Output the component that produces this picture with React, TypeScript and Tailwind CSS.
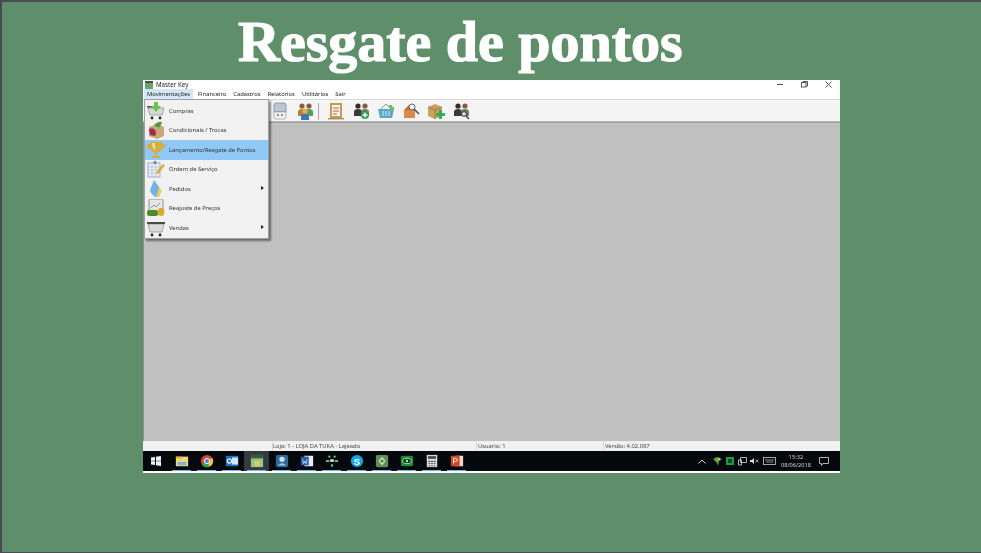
import React from 'react';

const sans = "font-['Noto_Sans','Liberation_Sans',Arial,sans-serif]";

function Person({ x, y, color, skin = '#8a5a3a' }: { x: number; y: number; color: string; skin?: string }) {
  return (
    <g>
      <circle cx={x} cy={y} r={2.6} fill={skin} />
      <path d={`M${x - 4} ${y + 10} v-4 q0 -3 4 -3 q4 0 4 3 v4 z`} fill={color} />
    </g>
  );
}

const Cart = ({ fill }: { fill: string }) => (
  <svg width="18" height="18" viewBox="0 0 18 18">
    <path d="M1 5h16l-2 8H3z" fill={fill} stroke="#8b8b8b" strokeWidth=".7" />
    <rect x="0" y="3" width="18" height="2" fill="#4b4b4b" />
    <circle cx="5" cy="16" r="1.4" fill="#222" />
    <circle cx="13" cy="16" r="1.4" fill="#222" />
  </svg>
);

const menuIcons: Record<string, React.ReactNode> = {
  compras: (
    <svg width="18" height="18" viewBox="0 0 18 18">
      <path d="M1 6h16l-2 7H3z" fill="#d8d8d8" stroke="#8b8b8b" strokeWidth=".7" />
      <rect x="0" y="4" width="6" height="1.6" fill="#555" />
      <path d="M7 0h4v4h3l-5 6-5-6h3z" fill="#6cc24a" />
      <circle cx="5" cy="16" r="1.4" fill="#222" />
      <circle cx="13" cy="16" r="1.4" fill="#222" />
    </svg>
  ),
  condicionais: (
    <svg width="18" height="18" viewBox="0 0 18 18">
      <path d="M2 6l8-3 7 3v9l-7 3-8-3z" fill="#c7a877" />
      <path d="M2 8q4-2 6 1t0 6l-5-1z" fill="#a32a4a" />
      <path d="M7 4q4-4 8-3l-2 5q-3 1-6-2" fill="#4f9a3a" />
    </svg>
  ),
  lancamento: (
    <svg width="18" height="18" viewBox="0 0 18 18">
      <path d="M3 1h12v2h3q0 5-4 6-2 3-4 3v3h3v2H5v-2h3v-3q-2 0-4-3Q0 8 0 3h3z" fill="#d2ae45" />
      <path d="M5 2h3v7q-3-2-3-7" fill="#f1e08a" />
    </svg>
  ),
  ordem: (
    <svg width="18" height="18" viewBox="0 0 18 18">
      <rect x="1" y="3" width="12" height="14" fill="#eef1f5" stroke="#8a9bb0" strokeWidth=".8" />
      <path d="M1 7h12M1 10h12M1 13h12M5 3v14M9 3v14" stroke="#9db3cc" strokeWidth=".6" />
      <path d="M10 11l6-7 2 1-6 8-3 1z" fill="#e8a53a" />
      <path d="M8 0l1 2 2 .5-2 .5-1 2-1-2-2-.5 2-.5z" fill="#6b7f99" />
    </svg>
  ),
  pedidos: (
    <svg width="18" height="18" viewBox="0 0 18 18">
      <path d="M9 3l6 8-3 6H8z" fill="#eccb62" />
      <path d="M7 0l5 7-3 10q-5-2-6-7z" fill="#6fb3e8" />
    </svg>
  ),
  reajuste: (
    <svg width="18" height="18" viewBox="0 0 18 18">
      <rect x="2" y="0" width="14" height="13" rx="1.5" fill="#e6e6e6" stroke="#777" strokeWidth=".8" />
      <path d="M4 9l3-3 2 2 4-4" stroke="#8a9a8a" fill="none" />
      <rect x="0" y="11" width="11" height="6" rx="2" fill="#4f8a2a" />
      <ellipse cx="14" cy="13" rx="3.4" ry="4" fill="#d9a92e" />
    </svg>
  ),
  vendas: <Cart fill="#d9d9d9" />,
};

const menuItems = [
  { key: 'compras', label: 'Compras' },
  { key: 'condicionais', label: 'Condicionais / Trocas' },
  { key: 'lancamento', label: 'Lançamento/Resgate de Pontos', active: true },
  { key: 'ordem', label: 'Ordem de Serviço' },
  { key: 'pedidos', label: 'Pedidos', sub: true },
  { key: 'reajuste', label: 'Reajuste de Preços' },
  { key: 'vendas', label: 'Vendas', sub: true },
];

const topMenu = ['Financeiro', 'Cadastros', 'Relatórios', 'Utilitários', 'Sair'];

const toolbarIcons: React.ReactNode[] = [
  <g key="usb">
    <path d="M5 1h8q2 0 2 2v7H3V3q0-2 2-2z" fill="#b9c7d6" stroke="#7c8896" strokeWidth=".8" />
    <path d="M3 10h12v5l-1 2H4l-1-2z" fill="#f2f2f2" stroke="#8a8a8a" strokeWidth=".6" />
    <path d="M6 13h2M10 13h2" stroke="#333" strokeWidth="1.2" />
  </g>,
  <g key="team">
    <Person x={6} y={4} color="#b5803a" />
    <Person x={13} y={4} color="#5a9a5a" />
    <Person x={9} y={9} color="#3f74c4" skin="#e2b23a" />
  </g>,
  null,
  <g key="clip">
    <rect x="3" y="1" width="12" height="15" fill="#c49a5a" />
    <rect x="5" y="3" width="8" height="11" fill="#fbf6ea" />
    <path d="M6 6h6M6 9h6M6 12h4" stroke="#c0504d" />
    <rect x="1" y="16" width="16" height="1.4" fill="#a98a52" />
  </g>,
  <g key="add">
    <Person x={6} y={4} color="#3a3a3a" skin="#3a2a20" />
    <Person x={13} y={4} color="#6a7f6a" />
    <circle cx="13" cy="13" r="4" fill="#2f9e55" />
    <path d="M13 10.5v5M10.5 13h5" stroke="#fff" strokeWidth="1.3" />
  </g>,
  <g key="basket">
    <path d="M1 7h16l-2 9H3z" fill="#5aa7c9" />
    <path d="M4 7l5-5 5 5" stroke="#7d9aa8" fill="none" />
    <path d="M6 9v5M9 9v5M12 9v5" stroke="#d8eef6" />
    <path d="M12 3h3v2h2v3h-3v-2h-2z" fill="#6cc24a" />
  </g>,
  <g key="search">
    <rect x="2" y="8" width="11" height="8" fill="#d98a4a" />
    <path d="M2 8l5-5 6 5z" fill="#c46a33" />
    <circle cx="10" cy="5" r="3" fill="#eef" stroke="#666" />
    <path d="M12 7l5 5" stroke="#444" strokeWidth="1.4" />
  </g>,
  <g key="box">
    <path d="M1 5l7-3 7 3v9l-7 3-7-3z" fill="#c9a15e" />
    <path d="M1 5l7 3 7-3M8 8v9" stroke="#8d6d35" fill="none" strokeWidth=".7" />
    <path d="M12 8h3v3h3v3h-3v3h-3v-3H9v-3h3z" fill="#2fae55" />
  </g>,
  <g key="find">
    <Person x={6} y={4} color="#3a3a3a" skin="#3a2a20" />
    <Person x={13} y={4} color="#6a7f6a" />
    <circle cx="12" cy="12" r="2.4" fill="#dde" stroke="#333" />
    <path d="M14 14l3 3" stroke="#333" strokeWidth="1.3" />
  </g>,
];

const taskIcons: { node: React.ReactNode; active?: boolean }[] = [
  { node: <g><rect x="1" y="3" width="14" height="11" fill="#f4d774" /><rect x="1" y="3" width="7" height="2.5" fill="#e4b93e" /><rect x="3" y="9" width="10" height="4" fill="#6fb8e0" /></g> },
  { node: <g><circle cx="8" cy="8" r="7" fill="#d9443a" /><path d="M8 8L2 12a7 7 0 0 0 9 2.5z" fill="#3da24f" /><path d="M8 8l3 6.500a7 7 0 0 0 3-10z" fill="#f3c334" /><circle cx="8" cy="8" r="3" fill="#4a86e0" stroke="#fff" /></g> },
  { node: <g><rect x="1" y="2" width="14" height="12" fill="#1a72c4" /><rect x="8" y="4" width="7" height="8" fill="#d4e6f6" /><circle cx="5" cy="8" r="2.4" fill="none" stroke="#fff" strokeWidth="1.2" /></g> },
  { node: <g><rect x="1" y="1" width="14" height="14" fill="#8fc98a" /><rect x="1" y="1" width="14" height="4" fill="#3a5a3a" /><path d="M5 8h6v6H5z" fill="#e6c65e" /></g>, active: true },
  { node: <g><rect x="1" y="1" width="14" height="14" rx="2" fill="#2f6a96" /><circle cx="8" cy="6" r="3" fill="#cfe2f0" /><path d="M3 13q5-5 10 0z" fill="#9cc1dc" /></g> },
  { node: <g><rect x="5" y="2" width="10" height="12" fill="#e8eef8" /><rect x="1" y="3" width="9" height="10" fill="#2b5cad" /><path d="M3 6l1 5 1.500-3 1.500 3 1-5" stroke="#fff" fill="none" strokeWidth=".7" /></g> },
  { node: <g fill="#6fcf8a"><rect x="1" y="7" width="4" height="2" /><rect x="6" y="6" width="4" height="3" fill="#e8e8e8" /><rect x="11" y="7" width="4" height="2" /><circle cx="5" cy="3" r="1.3" /><circle cx="11" cy="3" r="1.3" /><circle cx="8" cy="13" r="1.400" /></g> },
  { node: <g><circle cx="8" cy="8" r="7" fill="#11a7e4" /><text x="8" y="12" textAnchor="middle" fontSize="11" fontWeight="bold" fill="#fff" fontFamily="Liberation Sans">S</text></g> },
  { node: <g><rect x="1" y="1" width="14" height="14" rx="2" fill="#5f8f5f" /><path d="M8 3l4 5-4 5-4-5z" fill="#d6e08a" /><circle cx="8" cy="8" r="1.800" fill="#3f6ea8" /></g> },
  { node: <g><rect x="1" y="2" width="14" height="12" rx="2" fill="#1f8a3a" /><ellipse cx="8" cy="8" rx="5" ry="3" fill="#0d3a18" stroke="#a9e8b0" /><circle cx="8" cy="8" r="1.400" fill="#a9e8b0" /></g> },
  { node: <g><rect x="2" y="1" width="12" height="14" fill="#d8d8d8" /><rect x="3.500" y="2.500" width="9" height="3" fill="#444" /><path d="M4 8h2v1H4zM7 8h2v1H7zM10 8h2v1h-2zM4 10.500h2v1H4zM7 10.500h2v1H7zM10 10.500h2v1h-2zM4 13h2v1H4zM7 13h2v1H7zM10 13h2v1h-2z" fill="#333" /></g> },
  { node: <g><rect x="6" y="2" width="9" height="12" fill="#f0d8d0" /><rect x="1" y="2" width="10" height="12" fill="#d24726" /><path d="M4 11V5h2.500a1.500 1.500 0 0 1 0 3.500H4" stroke="#fff" fill="none" /></g> },
];

export default function App() {
  return (
    <div className="w-[981px] h-[553px] overflow-hidden bg-[#5f8f6a] border-l-[2px] border-t-[2px] border-b border-[#4a4a52] box-border">
      <h1 className="h-[78px] pl-[236px] pt-[5px] text-[58px] leading-[70px] font-bold text-white font-['Liberation_Serif',Georgia,serif] [-webkit-text-stroke:1.2px_white]">
        Resgate de pontos
      </h1>

      <div className={`relative ml-[141px] w-[697px] h-[393px] bg-white flex flex-col text-[5.8px] text-[#222] blur-[0.35px] ${sans}`}>
        {/* title bar */}
        <div className="h-[9px] flex items-center shrink-0 pl-[2px] relative">
          <span className="w-[8px] h-[8px] bg-[#6f9f70] border-t-[2px] border-[#3a5a3a] mr-[3px]" />
          <span className="text-[6.2px]">Master Key</span>
          <div className="ml-auto flex items-center gap-[17px] pr-[8px] text-[#555]">
            <svg width="7" height="7" viewBox="0 0 7 7"><path d="M0 3.500h6" stroke="#555" /></svg>
            <svg width="7" height="7" viewBox="0 0 7 7"><rect x="0.500" y="1.500" width="4.500" height="4.500" fill="none" stroke="#555" /><path d="M2 1.500V.500h4.500V5H5" fill="none" stroke="#555" /></svg>
            <svg width="7" height="7" viewBox="0 0 7 7"><path d="M.5.5l6 6M6.500.5l-6 6" stroke="#555" /></svg>
          </div>
        </div>

        {/* menu bar */}
        <div className="h-[11px] flex items-center shrink-0 border-b border-[#d8d8d8] pl-[1px]">
          <span className="h-[10px] px-[3px] flex items-center bg-[#d3e7f8] mr-[5px]">Movimentações</span>
          {topMenu.map((m) => (
            <span key={m} className="mr-[7px]">{m}</span>
          ))}
        </div>

        {/* toolbar */}
        <div className="h-[22px] shrink-0 flex items-center bg-[#f4f4f4] border-b border-[#b4b4b4] pl-[128px] pt-px">
          {toolbarIcons.map((icon, i) =>
            icon === null ? (
              <span key={i} className="w-px h-[17px] bg-[#a8a8a8] -ml-[3px] mr-[8px]" />
            ) : (
              <svg key={i} width="18" height="18" viewBox="0 0 18 18" className="mr-[7px] shrink-0">{icon}</svg>
            )
          )}
        </div>

        {/* work area */}
        <div className="flex-1 bg-[#c0c0c0] border-l border-[#8f8f8f] border-t border-t-[#a0a0a0]" />

        {/* status bar */}
        <div className="h-[10px] shrink-0 flex items-center bg-[#f1f1f1] text-[#444] pt-px">
          <span className="w-[127px]" />
          <span className="w-[3px] h-full border-r border-[#d8d8d8]" />
          <span className="w-[203px]">Loja: 1 - LOJA DA TUKA - Lajeado</span>
          <span className="w-[127px] pl-[1px] border-l border-[#d8d8d8]">Usuario: 1</span>
          <span className="pl-[1px] border-l border-[#d8d8d8]">Versão: 4.02.097</span>
        </div>

        {/* taskbar */}
        <div className="h-[20px] shrink-0 flex items-center bg-[#05080d] text-[#d5d5d5] pl-[8px]">
          <svg width="10" height="10" viewBox="0 0 10 10" className="shrink-0 mr-[8px]"><path d="M0 1.500l4-.6v3.800H0zM5 .8l5-.8v4.700H5zM0 5.300h4v3.800l-4-.6zM5 5.300h5V10l-5-.8z" fill="#f2f2f2" /></svg>
          {taskIcons.map((t, i) => (
            <div key={i} className={`relative w-[25px] h-[20px] flex items-center justify-center shrink-0 ${t.active ? 'bg-[#343a3d]' : ''}`}>
              <svg width="14" height="14" viewBox="0 0 16 16">{t.node}</svg>
              <span className="absolute bottom-0 left-[3px] right-[3px] h-px bg-[#76b9ed]" />
            </div>
          ))}
          <div className="ml-auto flex items-center h-full">
            <svg width="8" height="5" viewBox="0 0 8 5" className="mr-[7px]"><path d="M.5 4.500L4 1l3.500 3.500" stroke="#ddd" fill="none" /></svg>
            <svg width="9" height="9" viewBox="0 0 9 9" className="mr-[4px]"><path d="M0 2l4-2 5 2-3 2-1 5-1-3z" fill="#5aa84a" /><circle cx="6" cy="2" r="1.200" fill="#e6c63e" /></svg>
            <svg width="8" height="8" viewBox="0 0 8 8" className="mr-[4px]"><rect width="8" height="8" fill="#1f9a4a" /><rect x="2" y="2" width="4" height="4" fill="#0b4a20" /></svg>
            <svg width="9" height="9" viewBox="0 0 9 9" className="mr-[3px]"><path d="M2.500.5h6v5h-6zM.5 3h3v5h-3z" stroke="#ddd" fill="#05080d" strokeWidth=".8" /></svg>
            <svg width="9" height="8" viewBox="0 0 9 8" className="mr-[4px]"><path d="M0 3h2l2-2v6L2 5H0z" fill="#ddd" /><path d="M5.500 2.500l3 3M8.500 2.500l-3 3" stroke="#ddd" strokeWidth=".7" /></svg>
            <svg width="13" height="8" viewBox="0 0 13 8" className="mr-[5px]"><rect x=".5" y=".5" width="12" height="7" fill="none" stroke="#ccc" strokeWidth=".8" /><path d="M2 3h9M3 5h7" stroke="#ccc" strokeWidth=".7" /></svg>
            <div className="w-[30px] flex flex-col items-center leading-[8px] text-[5.600px]">
              <span>15:32</span>
              <span>08/06/2018</span>
            </div>
            <svg width="10" height="9" viewBox="0 0 10 9" className="ml-[8px] mr-[11px]"><path d="M.5.5h9v6H4L2.500 8.500v-2h-2z" stroke="#ddd" fill="none" strokeWidth=".8" /></svg>
          </div>
        </div>
        <div className="h-[2px] shrink-0 bg-white" />

        {/* open dropdown */}
        <div className="absolute left-[1px] top-[19px] w-[125px] h-[140px] pt-px bg-[#f1f1f1] border border-[#a0a0a0] shadow-[2px_2px_2px_rgba(0,0,0,0.45)] flex flex-col text-[#333]">
          {menuItems.map((item) => (
            <div key={item.key} className={`relative h-[19.5px] shrink-0 flex items-center pl-[2px] ${item.active ? 'bg-[#90c8f6]' : ''}`}>
              <span className="w-[18px] h-[18px] shrink-0 mr-[4px]">{menuIcons[item.key]}</span>
              <span className="pt-px">{item.label}</span>
              {item.sub && <span className="absolute right-[4px] top-[7px] w-0 h-0 border-y-[2.500px] border-y-transparent border-l-[3px] border-l-[#222]" />}
            </div>
          ))}
        </div>
      </div>
    </div>
  );
}
